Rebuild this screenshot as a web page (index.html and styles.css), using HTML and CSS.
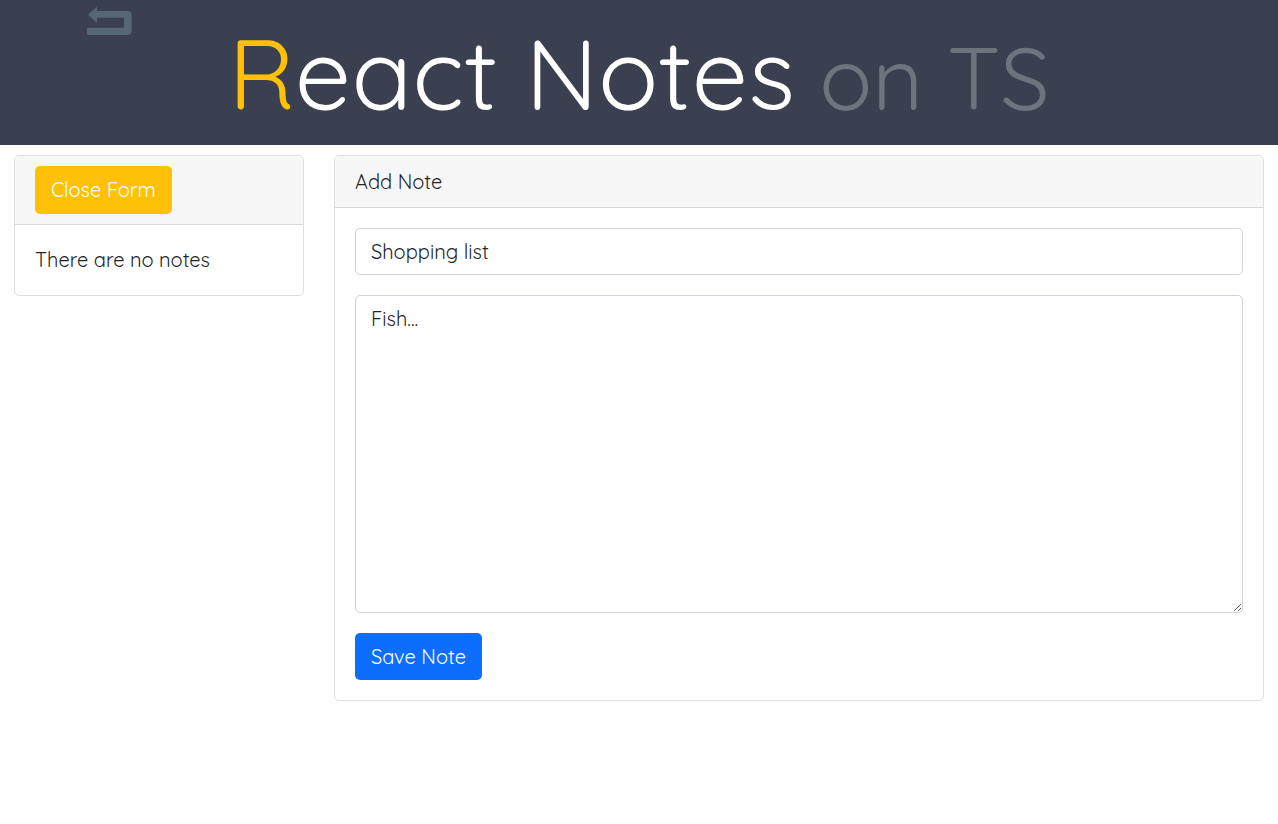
FILE: index.html
```html
<!DOCTYPE html>
<html lang="en">
<head>
<meta charset="utf-8">
<meta name="viewport" content="width=device-width, initial-scale=1">
<title>React Notes on TS</title>
<link rel="stylesheet" href="styles.css">
</head>
<body>
<header class="banner">
  <a class="back" href="#" aria-label="Back">
    <svg width="46" height="30" viewBox="0 0 46 30" aria-hidden="true">
      <path fill="currentColor" d="M1 8.700 10 .8V5h30.500q4.200 0 4.200 4.200v15.600q0 4.200-4.200 4.200H0v-7.300h37v-10H10v5.300z"/>
    </svg>
  </a>
  <h1 class="title"><span class="title-initial">R</span>eact Notes<small class="title-sub"> on TS</small></h1>
</header>
<main class="layout">
  <aside class="card card-list">
    <div class="card-header"><button class="btn btn-warning" type="button">Close Form</button></div>
    <div class="card-body"><p class="empty">There are no notes</p></div>
  </aside>
  <section class="card card-form">
    <h2 class="card-header">Add Note</h2>
    <form class="card-body form">
      <input class="field" type="text" aria-label="Note title" value="Shopping list">
      <textarea class="field field-text" aria-label="Note text">Fish...</textarea>
      <button class="btn btn-primary" type="button">Save Note</button>
    </form>
  </section>
</main>
</body>
</html>
```
FILE: styles.css
```css
* { box-sizing: border-box; }
body {
  margin: 0;
  background: #fff;
  color: #212529;
  font-family: Quicksand, Lato, sans-serif;
  font-size: 20px;
  font-weight: 400;
  line-height: 31px;
}
.banner {
  position: relative;
  padding: 13px 0 12px;
  background: #3b4050;
  text-align: center;
}
.back {
  position: absolute;
  top: 6px;
  left: 87px;
  color: #566673;
}
.back svg { display: block; }
.title {
  margin: 0;
  color: #fff;
  font-size: 100px;
  font-weight: 400;
  line-height: 120px;
}
.title-initial { color: #ffc107; }
.title-sub {
  color: #6c757d;
  font-size: 88px;
  font-weight: 400;
  line-height: 1;
}
.layout {
  display: grid;
  grid-template-columns: repeat(12, 1fr);
  column-gap: 30px;
  align-items: start;
  padding: 10px 14px;
}
.card {
  border: 1px solid #dfdfdf;
  border-radius: 5px;
  overflow: hidden;
}
.card-list { grid-column: span 3; }
.card-form { grid-column: span 9; }
.card-header {
  margin: 0;
  padding: 10px 20px;
  border-bottom: 1px solid #d8d8d8;
  background: #f7f7f7;
  font-size: 20px;
  font-weight: 400;
}
.card-body { padding: 20px; }
.empty { margin: 0; line-height: 30px; }
.form {
  display: flex;
  flex-direction: column;
  align-items: flex-start;
  gap: 20px;
}
.field {
  display: block;
  width: 100%;
  padding: 7px 15px;
  border: 1px solid #ced4da;
  border-radius: 5px;
  background: #fff;
  color: #212529;
  font: inherit;
}
.field-text { height: 318px; resize: vertical; }
.btn {
  display: block;
  padding: 8px 16px;
  border: 0;
  border-radius: 5px;
  color: #fff;
  font: inherit;
}
.btn-warning { background: #ffc107; line-height: 32px; }
.btn-primary { background: #0d6efd; }
```
